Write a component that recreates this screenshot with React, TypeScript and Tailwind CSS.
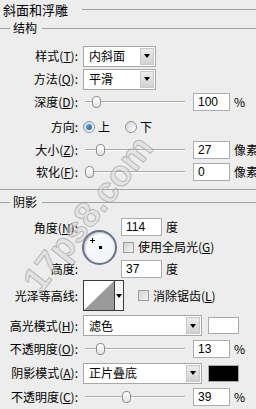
import React from "react";

interface RowProps {
  label?: React.ReactNode;
  className: string;
  children?: React.ReactNode;
}

const Row = ({ label, className, children }: RowProps) => (
  <div className={`flex items-center ${className}`}>
    <div className="w-[78px] shrink-0 whitespace-nowrap text-right">{label}</div>
    <div className="ml-[5px] flex shrink-0 items-center whitespace-nowrap">{children}</div>
  </div>
);

const GroupHeader = ({ title }: { title: string }) => (
  <div className="flex h-[18px] items-center">
    <div className="w-[10px] border-t border-[#a3a3a3]" />
    <span className="pl-[3px] pr-[5px]">{title}</span>
    <div className="flex-1 border-t border-[#a3a3a3]" />
  </div>
);

const Dropdown = ({ value, className }: { value: string; className: string }) => (
  <div className={`flex h-[21px] border border-[#a7a7a7] bg-white ${className}`}>
    <div className="flex flex-1 items-center pl-[5px]">{value}</div>
    <div className="m-px flex w-[14px] items-center justify-center border border-[#c8c8c8] bg-gradient-to-b from-[#ececec] to-[#d2d2d2]">
      <div className="h-0 w-0 border-x-[3px] border-t-[4px] border-x-transparent border-t-black" />
    </div>
  </div>
);

const Slider = ({ pos }: { pos: number }) => (
  <div className="relative ml-[2px] h-[12px] w-[100px]">
    <div className="absolute left-0 right-0 top-[5px] h-[2px] border-t border-[#a9a9a9] bg-white" />
    <div
      className="absolute top-0 h-[12px] w-[9px] rounded-[4px] border border-[#8e8e8e] bg-gradient-to-b from-white to-[#e4e4e4]"
      style={{ left: pos }}
    />
  </div>
);

const NumInput = ({ value, className }: { value: string; className: string }) => (
  <div className={`flex h-[18px] items-center border border-[#a9aeb4] bg-white pl-[4px] font-['Liberation_Sans',sans-serif] ${className}`}>
    {value}
  </div>
);

const Radio = ({ checked }: { checked?: boolean }) => (
  <div className="flex h-[12px] w-[12px] items-center justify-center rounded-full border border-[#8c929c] bg-gradient-to-br from-[#d4d4d4] to-white">
    {checked && <div className="h-[6px] w-[6px] rounded-full bg-gradient-to-br from-[#6fb6e8] to-[#145a97]" />}
  </div>
);

const Check = () => (
  <div className="h-[11px] w-[11px] border border-[#9c9c9c] bg-gradient-to-br from-[#d2d2d2] to-[#f4f4f4]" />
);

const K = ({ c }: { c: string }) => <span className="underline underline-offset-[1px]">{c}</span>;

export default function App() {
  return (
    <div className="relative h-[409px] w-[256px] overflow-hidden bg-[#ededed] font-['Noto_Sans_CJK_SC',sans-serif] text-[12px] leading-[14px] text-black">
      {/* title */}
      <div className="flex h-[19px] items-center">
        <span className="pl-[3px] text-[13px]">斜面和浮雕</span>
        <div className="ml-auto w-[174px] border-t border-[#a3a3a3]" />
      </div>

      {/* structure */}
      <GroupHeader title="结构" />
      <div className="h-[8px]" />
      <Row className="h-[22px]" label={<>样式(<K c="T" />):</>}>
        <Dropdown value="内斜面" className="w-[73px]" />
      </Row>
      <div className="h-px" />
      <Row className="h-[22px]" label={<>方法(<K c="Q" />):</>}>
        <Dropdown value="平滑" className="w-[73px]" />
      </Row>
      <Row className="h-[24px]" label={<>深度(<K c="D" />):</>}>
        <Slider pos={7} />
        <NumInput value="100" className="ml-[8px] w-[37px]" />
        <span className="ml-[4px]">%</span>
      </Row>
      <Row className="h-[25px]" label="方向:">
        <Radio checked />
        <span className="ml-[3px]">上</span>
        <div className="ml-[15px]">
          <Radio />
        </div>
        <span className="ml-[3px]">下</span>
      </Row>
      <Row className="h-[21px]" label={<>大小(<K c="Z" />):</>}>
        <Slider pos={11} />
        <NumInput value="27" className="ml-[8px] w-[37px]" />
        <span className="ml-[4px]">像素</span>
      </Row>
      <Row className="h-[23px]" label={<>软化(<K c="F" />):</>}>
        <Slider pos={0} />
        <NumInput value="0" className="ml-[8px] w-[37px]" />
        <span className="ml-[4px]">像素</span>
      </Row>
      <div className="h-[6px]" />
      <div className="border-t border-[#a3a3a3]" />

      {/* shadow */}
      <div className="flex h-[24px] items-center">
        <div className="w-[10px] border-t border-[#a3a3a3]" />
        <span className="pl-[3px] pr-[5px]">阴影</span>
        <div className="flex-1 border-t border-[#a3a3a3]" />
      </div>

      <div className="flex h-[66px]">
        <div className="w-[78px] shrink-0 text-right">
          <div className="mt-[7px]">角度(<K c="N" />):</div>
          <div className="mt-[27px]">高度:</div>
        </div>
        <div className="relative ml-[4px] mt-[16px] h-[35px] w-[35px] rounded-full border-2 border-[#66728a] bg-gradient-to-br from-white to-[#eef0f4] shadow-[inset_1px_1px_2px_rgba(0,0,0,0.25)]">
          <div className="absolute left-[8px] top-[6px] h-[5px] w-px bg-black" />
          <div className="absolute left-[6px] top-[8px] h-px w-[5px] bg-black" />
          <div className="absolute left-[15px] top-[14px] h-[3px] w-[3px] bg-black" />
        </div>
        <div className="ml-[4px] flex flex-col">
          <div className="mt-[4px] flex items-center">
            <NumInput value="114" className="w-[41px]" />
            <span className="ml-[4px]">度</span>
          </div>
          <div className="flex h-[22px] items-center pl-[2px]">
            <Check />
            <span className="ml-[4px]">使用全局光(<K c="G" />)</span>
          </div>
          <div className="mt-[2px] flex items-center">
            <NumInput value="37" className="w-[41px]" />
            <span className="ml-[4px]">度</span>
          </div>
        </div>
      </div>

      <Row className="h-[31px]" label="光泽等高线:">
        <div className="flex h-[31px] w-[41px] border border-[#3a3a3a] bg-white">
          <svg width="30" height="29" viewBox="0 0 30 29" className="block">
            <polygon points="0,29 30,0 30,29" fill="#9a9a9a" />
          </svg>
          <div className="flex flex-1 items-center justify-center border-l border-[#3a3a3a] bg-[#f4f4f4]">
            <div className="h-0 w-0 border-x-[3px] border-t-[4px] border-x-transparent border-t-black" />
          </div>
        </div>
        <div className="ml-[14px]">
          <Check />
        </div>
        <span className="ml-[4px]">消除锯齿(<K c="L" />)</span>
      </Row>

      <div className="h-[3px]" />
      <Row className="h-[23px]" label={<>高光模式(<K c="H" />):</>}>
        <Dropdown value="滤色" className="w-[119px]" />
        <div className="ml-[6px] h-[17px] w-[31px] border border-[#a9a9a9] bg-white" />
      </Row>
      <Row className="h-[24px]" label={<>不透明度(<K c="O" />):</>}>
        <Slider pos={11} />
        <NumInput value="13" className="ml-[8px] w-[37px]" />
        <span className="ml-[4px]">%</span>
      </Row>
      <Row className="h-[24px]" label={<>阴影模式(<K c="A" />):</>}>
        <Dropdown value="正片叠底" className="w-[119px]" />
        <div className="ml-[6px] h-[17px] w-[31px] border border-[#a9a9a9] bg-black" />
      </Row>
      <Row className="h-[23px]" label={<>不透明度(<K c="C" />):</>}>
        <Slider pos={37} />
        <NumInput value="39" className="ml-[8px] w-[37px]" />
        <span className="ml-[4px]">%</span>
      </Row>

      {/* watermark */}
      <div className="pointer-events-none absolute left-[88px] top-[214px] -translate-x-1/2 -translate-y-1/2 -rotate-[52deg] whitespace-nowrap font-['Liberation_Sans',sans-serif] text-[36px] font-bold leading-none text-[rgba(220,220,220,0.55)] [-webkit-text-stroke:1px_rgba(120,120,120,0.45)]">
        17ps8.com
      </div>
    </div>
  );
}
